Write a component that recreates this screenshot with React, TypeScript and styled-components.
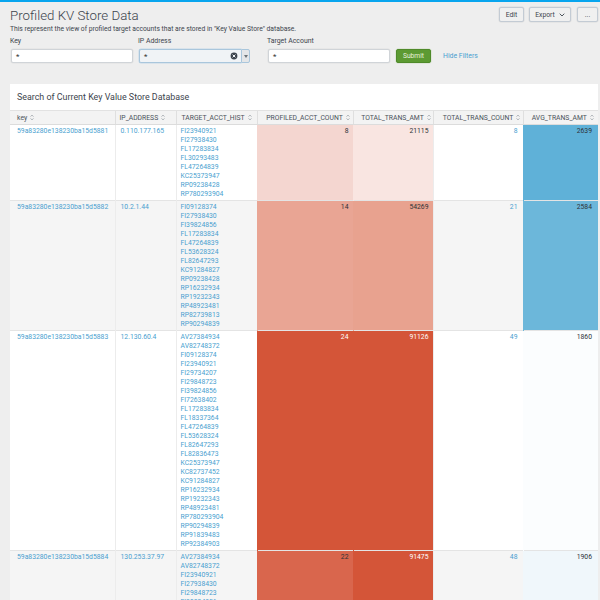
import React from "react";
import styled, { createGlobalStyle } from "styled-components";

const Global = createGlobalStyle`
  html, body { margin: 0; padding: 0; background: #eeeeee; }
  body { width: 600px; height: 600px; overflow: hidden; font-family: Roboto, "Liberation Sans", sans-serif; }
  #root { height: 600px; overflow: hidden; }
`;

const Page = styled.div`
  height: 600px;
  box-sizing: border-box;
  border-top: 2px solid #08a5ee;
  padding: 5px 2px 0 10px;
  overflow: hidden;
  color: #3c444d;
`;

const TitleRow = styled.div`
  display: flex;
  justify-content: space-between;
  align-items: flex-start;
  height: 29px;
`;

const Heading = styled.div`
  display: flex;
  flex-direction: column;
  padding-top: 1px;
`;

const Title = styled.h1`
  margin: 0;
  font-size: 13.3px;
  line-height: 16px;
  font-weight: 300;
  color: #3c444d;
`;

const Subtitle = styled.div`
  font-size: 6.74px;
  line-height: 9px;
  margin-top: 1px;
  color: #3c444d;
`;

const Actions = styled.div`
  display: flex;
`;

const ActionButton = styled.button<{ $w: number; $ml?: number }>`
  width: ${(p) => p.$w}px;
  height: 15px;
  margin: 0 0 0 ${(p) => p.$ml ?? 0}px;
  padding: 0;
  box-sizing: border-box;
  border: 1px solid #c3cbd4;
  border-radius: 2px;
  box-shadow: 0 0 0 0.5px #dcdcdc;
  background: #f0f0f0;
  color: #3c444d;
  font: 400 6.8px Roboto, sans-serif;
  display: flex;
  align-items: center;
  justify-content: center;
  gap: 4px;
`;

const Filters = styled.div`
  display: flex;
  align-items: flex-start;
  height: 48px;
`;

const Field = styled.div<{ $w: number; $mr: number }>`
  width: ${(p) => p.$w}px;
  margin-right: ${(p) => p.$mr}px;
  padding-left: 1px;
  box-sizing: border-box;
  display: flex;
  flex-direction: column;
`;

const Label = styled.label`
  font-size: 6.9px;
  line-height: 9px;
  height: 12px;
  margin: 1px 0 0 -1px;
  color: #3c444d;
`;

const Input = styled.div<{ $focus?: boolean }>`
  height: 14px;
  box-sizing: border-box;
  border: 1px solid ${(p) => (p.$focus ? "#a9c6dc" : "#d0d4d8")};
  border-radius: 2px;
  background: ${(p) => (p.$focus ? "#f0f3f6" : "#ffffff")};
  box-shadow: 0 0 0 0.5px ${(p) => (p.$focus ? "#c3d8e8" : "#e0e0e0")};
  font-size: 8px;
  line-height: 13px;
  padding-left: 4px;
  display: flex;
  align-items: center;
  justify-content: space-between;
  color: #333;
`;

const SelectWrap = styled.div`
  display: flex;
`;

const SelectInput = styled(Input)`
  flex: 1;
  border-radius: 2px 0 0 2px;
  border-right: none;
  padding-right: 3px;
`;

const SelectToggle = styled.div`
  width: 9px;
  height: 14px;
  box-sizing: border-box;
  border: 1px solid #a9c6dc;
  border-radius: 0 2px 2px 0;
  background: #e4e6e8;
  display: flex;
  align-items: center;
  justify-content: center;
`;

const Submit = styled.button`
  width: 35px;
  height: 14px;
  margin: 13px 12px 0 0;
  padding: 0;
  box-sizing: border-box;
  border: 1px solid #4f8a2a;
  border-radius: 2px;
  background: #5c9a32;
  box-shadow: 0 0 0 0.5px #cfdcc5;
  color: #e6f0dc;
  font: 400 6.7px Roboto, sans-serif;
`;

const HideLink = styled.a`
  margin-top: 13px;
  font-size: 6.9px;
  line-height: 14px;
  color: #4a9fd0;
`;

const Panel = styled.section`
  background: #ffffff;
`;

const PanelTitle = styled.h2`
  margin: 0;
  height: 26px;
  padding: 0 7px;
  font-size: 8.9px;
  line-height: 26px;
  font-weight: 400;
  color: #3c444d;
  box-sizing: border-box;
`;

const Table = styled.table`
  width: 588px;
  border-collapse: collapse;
  table-layout: fixed;
  font-size: 6.8px;
`;

const Th = styled.th<{ $align?: string; $pl?: number }>`
  height: 14px;
  padding: 0 ${(p) => (p.$align === "center" ? 0 : 3)}px 0 ${(p) => p.$pl ?? 5}px;
  box-sizing: border-box;
  background: #f3f3f3;
  border-top: 1px solid #e2e2e2;
  border-bottom: 1px solid #dcdcdc;
  border-left: 1px solid #dfdfdf;
  font-weight: 400;
  text-align: ${(p) => p.$align ?? "left"};
  color: #4a525a;
  white-space: nowrap;
  overflow: hidden;
  &:first-child { border-left: none; }
`;

const Sort = styled.svg`
  margin-left: 3px;
  vertical-align: -1px;
`;

const Tr = styled.tr<{ $alt?: boolean }>`
  background: ${(p) => (p.$alt ? "#f5f5f5" : "#ffffff")};
  border-bottom: 1px solid #e4e4e4;
`;

const Td = styled.td<{ $right?: boolean; $bg?: string; $light?: boolean; $link?: boolean; $pr?: number }>`
  vertical-align: top;
  padding: 2px ${(p) => p.$pr ?? 4}px 1px 7px;
  line-height: 9px;
  box-sizing: border-box;
  text-align: ${(p) => (p.$right ? "right" : "left")};
  background: ${(p) => p.$bg ?? "transparent"};
  color: ${(p) => (p.$light ? "#ffffff" : p.$link ? "#4a9fd0" : "#2e3338")};
  border-left: 1px solid ${(p) => (p.$bg ? p.$bg : "#ececec")};
  &:first-child { border-left: none; }
`;

const LinkCell = styled(Td)`
  color: #4a9fd0;
  white-space: nowrap;
`;

const IpCell = styled(LinkCell)`
  padding-left: 5px;
`;

const AcctCell = styled(LinkCell)`
  padding-left: 4px;
`;

const Acct = styled.div`
  height: 9px;
  white-space: nowrap;
`;

const columns: { w: number; label: string; align?: string; pl?: number }[] = [
  { w: 105, label: "key", pl: 7 },
  { w: 61, label: "IP_ADDRESS", pl: 4 },
  { w: 81, label: "TARGET_ACCT_HIST", pl: 5 },
  { w: 96, label: "PROFILED_ACCT_COUNT", align: "center", pl: 6 },
  { w: 80, label: "TOTAL_TRANS_AMT", align: "center", pl: 6 },
  { w: 90, label: "TOTAL_TRANS_COUNT", align: "center", pl: 7 },
  { w: 75, label: "AVG_TRANS_AMT", align: "center", pl: 4 },
];

type Row = {
  key: string;
  ip: string;
  accts: string[];
  prof: number;
  profBg: string;
  profLight?: boolean;
  amt: number;
  amtBg: string;
  amtLight?: boolean;
  count: number;
  avg: number;
  avgBg?: string;
};

const rows: Row[] = [
  {
    key: "59a83280e138230ba15d5881",
    ip: "0.110.177.165",
    accts: ["FI23940921", "FI27938430", "FL17283834", "FL30293483", "FL47264839", "KC25373947", "RP09238428", "RP780293904"],
    prof: 8,
    profBg: "#f4d6d0",
    amt: 21115,
    amtBg: "#f9e5e1",
    count: 8,
    avg: 2639,
    avgBg: "#5fb1d8",
  },
  {
    key: "59a83280e138230ba15d5882",
    ip: "10.2.1.44",
    accts: ["FI09128374", "FI27938430", "FI39824856", "FL17283834", "FL47264839", "FL53628324", "FL82647293", "KC91284827", "RP09238428", "RP16232934", "RP19232343", "RP48923481", "RP82739813", "RP90294839"],
    prof: 14,
    profBg: "#e9a594",
    amt: 54269,
    amtBg: "#e8a28f",
    count: 21,
    avg: 2584,
    avgBg: "#6cb7da",
  },
  {
    key: "59a83280e138230ba15d5883",
    ip: "12.130.60.4",
    accts: ["AV27384934", "AV82748372", "FI09128374", "FI23940921", "FI29734207", "FI29848723", "FI39824856", "FI72638402", "FL17283834", "FL18337364", "FL47264839", "FL53628324", "FL82647293", "FL82836473", "KC25373947", "KC82737452", "KC91284827", "RP16232934", "RP19232343", "RP48923481", "RP780293904", "RP90294839", "RP91839483", "RP92384903"],
    prof: 24,
    profBg: "#d45538",
    profLight: true,
    amt: 91126,
    amtBg: "#d45538",
    amtLight: true,
    count: 49,
    avg: 1860,
    avgBg: "#fbfdfe",
  },
  {
    key: "59a83280e138230ba15d5884",
    ip: "130.253.37.97",
    accts: ["AV27384934", "AV82748372", "FI23940921", "FI27938430", "FI29848723", "FI39824856"],
    prof: 22,
    profBg: "#d9664d",
    amt: 91475,
    amtBg: "#d45538",
    amtLight: true,
    count: 48,
    avg: 1906,
    avgBg: "#f0f7fb",
  },
];

const SortIcon = () => (
  <Sort width="4" height="7" viewBox="0 0 4 7" fill="none" stroke="#9aa0a6" strokeWidth="0.7">
    <path d="M0.5 2.7 L2 1 L3.5 2.7" />
    <path d="M0.5 4.3 L2 6 L3.5 4.3" />
  </Sort>
);

export default function App() {
  return (
    <>
      <Global />
      <Page>
        <TitleRow>
          <Heading>
            <Title>Profiled KV Store Data</Title>
            <Subtitle>This represent the view of profiled target accounts that are stored in "Key Value Store" database.</Subtitle>
          </Heading>
          <Actions>
            <ActionButton $w={25}>Edit</ActionButton>
            <ActionButton $w={42} $ml={5}>
              Export
              <svg width="6" height="4" viewBox="0 0 6 4" fill="none" stroke="#3c444d" strokeWidth="0.9">
                <path d="M0.7 0.7 L3 3 L5.3 0.7" />
              </svg>
            </ActionButton>
            <ActionButton $w={21} $ml={6}>...</ActionButton>
          </Actions>
        </TitleRow>
        <Filters>
          <Field $w={123} $mr={5}>
            <Label>Key</Label>
            <Input>*</Input>
          </Field>
          <Field $w={112} $mr={17}>
            <Label>IP Address</Label>
            <SelectWrap>
              <SelectInput $focus>
                *
                <svg width="8" height="8" viewBox="0 0 8 8">
                  <circle cx="4" cy="4" r="3.4" fill="#3c444d" />
                  <path d="M2.6 2.6 L5.4 5.4 M5.4 2.6 L2.6 5.4" stroke="#f0f3f6" strokeWidth="1" />
                </svg>
              </SelectInput>
              <SelectToggle>
                <svg width="4" height="3" viewBox="0 0 4 3">
                  <path d="M0 0 H4 L2 3 Z" fill="#6b7278" />
                </svg>
              </SelectToggle>
            </SelectWrap>
          </Field>
          <Field $w={123} $mr={6}>
            <Label>Target Account</Label>
            <Input>*</Input>
          </Field>
          <Submit>Submit</Submit>
          <HideLink>Hide Filters</HideLink>
        </Filters>
        <Panel>
          <PanelTitle>Search of Current Key Value Store Database</PanelTitle>
          <Table>
            <colgroup>
              {columns.map((c) => (
                <col key={c.label} width={c.w} />
              ))}
            </colgroup>
            <thead>
              <tr>
                {columns.map((c) => (
                  <Th key={c.label} $align={c.align} $pl={c.pl}>
                    {c.label}
                    <SortIcon />
                  </Th>
                ))}
              </tr>
            </thead>
            <tbody>
              {rows.map((r, i) => (
                <Tr key={r.key} $alt={i % 2 === 1}>
                  <LinkCell>{r.key}</LinkCell>
                  <IpCell>{r.ip}</IpCell>
                  <AcctCell>
                    {r.accts.map((a, j) => (
                      <Acct key={j}>{a}</Acct>
                    ))}
                  </AcctCell>
                  <Td $right $bg={r.profBg} $light={r.profLight}>{r.prof}</Td>
                  <Td $right $bg={r.amtBg} $light={r.amtLight}>{r.amt}</Td>
                  <Td $right $link $pr={5}>{r.count}</Td>
                  <Td $right $bg={r.avgBg} $pr={6}>{r.avg}</Td>
                </Tr>
              ))}
            </tbody>
          </Table>
        </Panel>
      </Page>
    </>
  );
}
